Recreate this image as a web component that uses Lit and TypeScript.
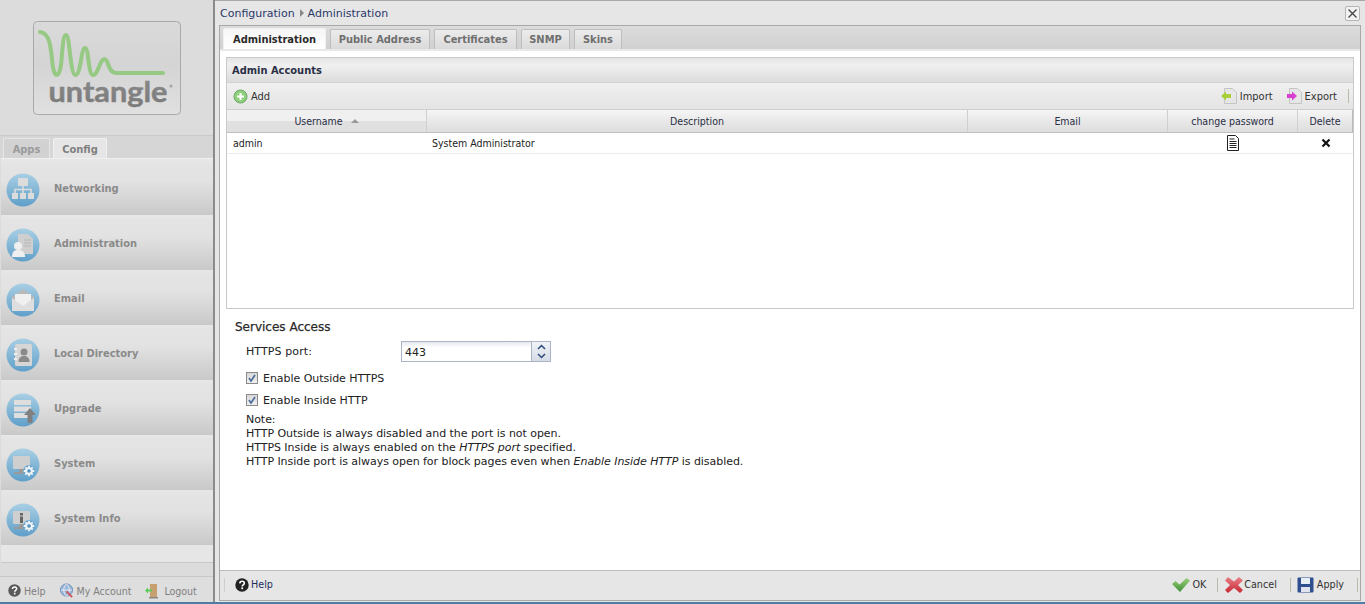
import { LitElement, html, css, svg } from "lit";
import { customElement } from "lit/decorators.js";

const disc = (inner: unknown) => html`<svg class="nav-ico" viewBox="0 0 34 34" width="34" height="34">
  <defs><linearGradient id="dg" x1="0" y1="0" x2="0" y2="1"><stop offset="0" stop-color="#a9cfe4"/><stop offset="1" stop-color="#5f9fc9"/></linearGradient></defs>
  <circle cx="17" cy="17" r="16.5" fill="url(#dg)"/>${inner}</svg>`;

const gear = svg`<g transform="translate(23 23)"><circle r="6" fill="#6aa6cf"/><g stroke="#eef3f7" stroke-width="1.800"><path d="M0-5.300V5.300M-5.300 0H5.300M-3.700-3.700 3.700 3.700M-3.700 3.700 3.700-3.700"/></g><circle r="3.800" fill="#eef3f7"/><circle r="1.800" fill="#4d8fbd"/></g>`;

const icons: Record<string, unknown> = {
  Networking: svg`<g fill="#dcdcdc"><rect x="12" y="5" width="10" height="8" rx="1"/><rect x="6" y="20" width="6" height="6"/><rect x="14" y="20" width="6" height="6"/><rect x="22" y="20" width="6" height="6"/></g><path d="M17 13v7M9 20v-3.500h16V20" fill="none" stroke="#dcdcdc" stroke-width="1.6"/>`,
  Administration: svg`<path d="M12 6h10l5 5v15H12z" fill="#cfcfcf"/><path d="M18 12h7M18 15h7M18 18h7" stroke="#b5b5b5"/><circle cx="12" cy="18" r="4" fill="#efefef"/><path d="M6 29c0-6 3-7 6-7s7 1 7 7z" fill="#efefef"/>`,
  Email: svg`<path d="M6 14 17 6l11 8v13H6z" fill="#b9b9b9"/><path d="M9 11h16v9l-8 4-8-4z" fill="#f0f0f0"/><path d="M6 15l11 8 11-8v13H6z" fill="#dedede"/>`,
  "Local Directory": svg`<rect x="9" y="6" width="17" height="22" rx="1.500" fill="#d6d6d6"/><g fill="#eee"><rect x="8" y="10" width="3" height="2"/><rect x="8" y="15" width="3" height="2"/><rect x="8" y="20" width="3" height="2"/></g><circle cx="18" cy="14" r="3.500" fill="#8a8a8a"/><path d="M12.500 24c0-5 3-6 5.500-6s5.500 1 5.500 6z" fill="#8a8a8a"/>`,
  Upgrade: svg`<g fill="#dedede"><rect x="8" y="7" width="17" height="5"/><rect x="8" y="13.500" width="17" height="5"/><rect x="8" y="20" width="17" height="5"/></g><path d="M24 15l6 7h-3.500v8h-5v-8H18z" fill="#808080"/>`,
  System: svg`<rect x="7" y="8" width="17" height="13" rx="1" fill="#cfcfcf"/><rect x="13" y="21" width="5" height="3" fill="#9a9a9a"/><rect x="8" y="24" width="14" height="2" fill="#9a9a9a"/>${gear}`,
  "System Info": svg`<rect x="7" y="8" width="17" height="13" rx="1" fill="#cfcfcf"/><rect x="14" y="10" width="3" height="2.500" fill="#666"/><rect x="14" y="13.500" width="3" height="6.500" fill="#666"/><rect x="13" y="21" width="5" height="3" fill="#9a9a9a"/><rect x="8" y="24" width="14" height="2" fill="#9a9a9a"/>${gear}`,
};

const question = (s: number) => html`<svg width=${s} height=${s} viewBox="0 0 14 14"><circle cx="7" cy="7" r="6.700" fill="currentColor"/><path d="M4.800 5.400C4.900 3.900 5.900 3.300 7.100 3.300c1.300 0 2.200.8 2.200 1.900 0 1.700-2.100 1.600-2.100 3.200" fill="none" stroke="#fff" stroke-width="1.600"/><rect x="6.300" y="9.400" width="1.800" height="1.800" fill="#fff"/></svg>`;

const doc = (color: string, dir: "l" | "r") => html`<svg width="16" height="16" viewBox="0 0 16 16">
  <path d="M3.500 .5h8l4 4v11h-12z" fill="#e6e6e6" stroke="#c4c4c4"/>
  <path d=${dir === "l" ? "M0 8l5-4.500v2.500h5v4H5v2.500z" : "M11 8 6 3.500v2.500H1v4h5v2.500z"} fill=${color}/>
</svg>`;

@customElement("app-root")
export class AppRoot extends LitElement {
  static styles = css`
    :host { display: block; width: 1365px; height: 604px; overflow: hidden; background: #4d7da3; }
    * { box-sizing: border-box; }
    .page { display: flex; height: 602px; font: 11px "DejaVu Sans", sans-serif; color: #222; background: #dcdcdc; }
    .narrow { font-family: "DejaVu Sans Condensed", "DejaVu Sans", sans-serif; font-stretch: condensed; }

    .side { width: 213px; flex: none; display: flex; flex-direction: column; background: #dcdcdc; }
    .logo-area { height: 135px; padding: 21px 0 0 33px; }
    .side-tabs { height: 23px; border-top: 1px solid #c9c9c9; padding: 2px 0 0 3px; display: flex; gap: 3px; background: #d6d6d6; align-items: flex-end; }
    .stab { height: 20px; border: 1px solid #e6e6e6; border-bottom: 0; border-radius: 2px 2px 0 0; font-weight: bold; color: #9a9a9a; padding-top: 4px; text-align: center; background: #d2d2d2; }
    .stab.on { background: #e6e6e6; color: #808080; border-color: #f0f0f0; }
    .nav { height: 405px; margin-left: 1px; padding-top: 4px; display: flex; flex-direction: column; background: #e6e6e6; border-top: 1px solid #f0f0f0; border-bottom: 1px solid #c8c8c8; }
    .nav-item { height: 52px; flex: none; margin-bottom: 3px; display: flex; align-items: center; padding-left: 5px; background: linear-gradient(#e4e4e4 0%, #e2e2e2 35%, #c9c9c9 100%); font-weight: bold; color: #8a8a8a; }
    .nav-item span { padding-bottom: 2px; }
    .nav-ico { flex: none; margin-right: 14px; margin-top: 1px; }
    .side-foot { margin-top: 13px; flex: 1; border-top: 1px solid #c9c9c9; display: flex; align-items: center; padding: 2px 0 0 8px; color: #7f7f7f; font-size: 10.5px; background: #dedede; }
    .side-foot .a { display: flex; align-items: center; gap: 3px; }
    .side-foot .h { color: #5a5a5a; margin-right: 13px; }
    .side-foot .m { margin-right: 14px; }

    .rule { width: 2px; flex: none; background: #8b8b8b; }

    .win { flex: 1; min-width: 0; display: flex; flex-direction: column; background: #e6e6e6; border-top: 1px solid #a8a8a8; }
    .crumb { height: 24px; flex: none; display: flex; align-items: center; padding: 0 5px 0 4px; color: #2a3868; margin-left: 1px; }
    .crumb .arrow { width: 0; height: 0; border-left: 4px solid #888; border-top: 4px solid transparent; border-bottom: 4px solid transparent; margin: 0 4px 0 5px; }
    .close { margin-left: auto; width: 15px; height: 15px; border: 1px solid #b5b5b5; border-radius: 2px; background: #f2f2f2; display: flex; }

    .frame { flex: 1; min-height: 0; margin: 0 4px 0 4px; border: 1px solid #a8a8a8; background: #fff; display: flex; flex-direction: column; }
    .tabbar { height: 25px; flex: none; display: flex; gap: 4px; padding: 3px 0 0 3px; background: linear-gradient(#dcdcdc, #d0d0d0); border-bottom: 2px solid #e8e8e8; align-items: flex-end; }
    .tab { height: 20px; border: 1px solid #bdbdbd; border-bottom: 0; border-radius: 2px 2px 0 0; background: linear-gradient(#ececec, #dadada); font-weight: bold; color: #6f6f6f; text-align: center; padding-top: 3px; }
    .tab.on { background: linear-gradient(#f6f6f6, #fff); color: #2a2a2a; border-color: #f0f0f0; height: 21px; padding-top: 4px; }

    .body { flex: 1; min-height: 0; padding: 6px 6px 0 6px; }
    .grid { height: 252px; border: 1px solid #c9c9c9; display: flex; flex-direction: column; background: #fff; }
    .g-title { height: 25px; flex: none; background: linear-gradient(#e4e4e4, #f0f0f0 30%, #dcdcdc); padding: 1px 5px 0; display: flex; align-items: center; font-weight: bold; color: #2a2f45; border-bottom: 1px solid #d2d2d2; }
    .g-tools { height: 27px; flex: none; display: flex; align-items: center; padding: 0 4px 0 6px; background: linear-gradient(#f0f0f0, #e4e4e4); border-bottom: 1px solid #cfcfcf; color: #333; }
    .tool { display: flex; align-items: center; gap: 3px; }
    .g-tools .sp { flex: 1; }
    .sep { width: 1px; height: 14px; background: #bdb9a8; }
    .cols, .row { display: grid; grid-template-columns: 200px 541px 200px 130px 1fr; flex: none; font-size: 10.5px; }
    .cols { height: 23px; border-bottom: 1px solid #c0c0c0; background: linear-gradient(#f6f6f6, #e8e8e8 50%, #dedede); }
    .cols > div { display: flex; align-items: center; justify-content: center; border-right: 1px solid #cfcfcf; color: #2a2f45; }
    .cols > div.sorted { background: linear-gradient(#f0f0f0 50%, #e0e0e0 50%); }
    .cols > div:last-child { border-right: 1px solid #bbb; }
    .caret { width: 0; height: 0; margin-left: 8px; border-left: 4px solid transparent; border-right: 4px solid transparent; border-bottom: 4px solid #999; }
    .row { height: 21px; border-bottom: 1px solid #ececec; align-items: center; color: #222; }
    .row > div { padding-left: 6px; }
    .row > div.d { padding-left: 5px; }
    .row .c { padding: 0; display: flex; justify-content: center; }

    .svc { padding: 11px 0 0 9px; }
    .svc h4 { margin: 0; font: inherit; font-weight: normal; font-size: 12px; -webkit-text-stroke: .25px #2a2a2a; color: #2a2a2a; line-height: 14px; }
    .form { padding: 7px 0 0 11px; letter-spacing: -0.045px; }
    .f-row { display: flex; align-items: center; height: 21px; }
    .f-row label { width: 155px; letter-spacing: .1px; }
    .spin { display: flex; width: 150px; height: 21px; }
    .spin input { flex: 1; min-width: 0; border: 1px solid #abb5c5; background: linear-gradient(#e6e9ee, #fff 30%); font: inherit; padding: 1px 0 0 3px; color: #222; }
    .btns { width: 19px; flex: none; display: flex; flex-direction: column; border: 1px solid #abb5c5; border-left: 0; background: linear-gradient(#f0f2f6, #d6dce6); }
    .btns span { flex: 1; display: flex; align-items: center; justify-content: center; }
    .chk { display: flex; align-items: center; gap: 5px; height: 22px; }
    .chk .box { width: 12px; height: 12px; border: 1px solid #8a8a8a; background: linear-gradient(#d8d8d8, #f0f0f0); display: flex; }
    .note { margin: 0; line-height: 14px; padding-top: 2px; color: #222; }
    .note i { font-style: italic; }

    .foot { height: 30px; flex: none; display: flex; align-items: center; padding: 0 2px 2px 4px; background: #e6e6e6; border-top: 1px solid #bdbdbd; font-size: 10.7px; }
    .foot .sp { flex: 1; }
    .foot .lead { width: 1px; height: 14px; background: #cfcfcf; margin-right: 10px; }
    .foot .b { display: flex; align-items: center; color: #333; border-right: 1px solid #bdb9a8; height: 14px; }
    .foot .ok { gap: 2px; padding-right: 11px; margin-right: 7px; }
    .foot .cancel { gap: 1px; padding-right: 13px; margin-right: 6px; }
    .foot .apply { gap: 3px; padding-right: 13px; }
    .help { display: flex; align-items: center; gap: 2px; color: #1f2d5e; }
    .help svg { color: #222; }
  `;

  render() {
    const navs = ["Networking", "Administration", "Email", "Local Directory", "Upgrade", "System", "System Info"];
    const check = html`<svg width="10" height="10" viewBox="0 0 10 10"><path d="M2 5l2 3 4-6" fill="none" stroke="#4a6a9a" stroke-width="1.600"/></svg>`;
    return html`<div class="page">
      <aside class="side">
        <div class="logo-area">
          <svg width="149" height="95" viewBox="33 21 149 95">
            <defs>
              <linearGradient id="lg" x1="0" y1="0" x2="0" y2="1"><stop offset="0" stop-color="#dadada"/><stop offset=".45" stop-color="#d4d4d4"/><stop offset="1" stop-color="#e0e0e0"/></linearGradient>
              <linearGradient id="tg" x1="0" y1="0" x2="0" y2="1"><stop offset="0" stop-color="#8e8e8e"/><stop offset="1" stop-color="#787878"/></linearGradient>
            </defs>
            <rect x="33.500" y="21.500" width="147" height="93" rx="4" fill="url(#lg)" stroke="#a9a9a9"/>
            <path d="M40 32C50 33 51 48 52.500 64 54 79 60 79 61.500 60 63 42 63.500 35 66 35 70 35 70 75 75.500 75 81 75 81 48 85 48 89 48 88 75 93 75 98 75 100 59 104.500 59 108.500 59 108 73 116 73L163 73" fill="none" stroke="#96c983" stroke-width="4" stroke-linecap="round"/>
            <text x="48.500" y="102" textLength="119" lengthAdjust="spacingAndGlyphs" fill="url(#tg)" stroke="#848484" stroke-width=".5" font-family="Lato, 'Open Sans', sans-serif" font-size="29" font-weight="700">untangle</text>
            <circle cx="171" cy="86" r="1.600" fill="#a8a8a8"/>
          </svg>
        </div>
        <div class="side-tabs narrow">
          <div class="stab" style="width:47px">Apps</div>
          <div class="stab on" style="width:54px">Config</div>
        </div>
        <nav class="nav narrow">
          ${navs.map((n) => html`<div class="nav-item">${disc(icons[n])}<span>${n}</span></div>`)}
        </nav>
        <div class="side-foot narrow">
          <span class="a h">${question(13)}<span style="color:#7f7f7f">Help</span></span>
          <span class="a m"><svg width="15" height="15" viewBox="0 0 16 16"><circle cx="8" cy="7.500" r="6.500" fill="#9ab6d8" stroke="#6f8fba"/><path d="M2 7.500h12M8 1c-4 4-4 9 0 13M8 1c4 4 4 9 0 13" fill="none" stroke="#e8eef6"/><path d="M8 9l6 6" stroke="#d0505a" stroke-width="2"/></svg>My Account</span>
          <span class="a"><svg width="14" height="16" viewBox="0 0 14 16"><rect x="5" y="1" width="7" height="13" fill="#c8a070"/><rect x="4" y="14" width="9" height="1.500" fill="#888"/><path d="M0 7.500l3-3v2h4v2H3v2z" fill="#5ccb5c"/></svg><span style="margin-left:2px">Logout</span></span>
        </div>
      </aside>
      <div class="rule"></div>
      <main class="win">
        <div class="crumb"><span>Configuration</span><span class="arrow"></span><span>Administration</span>
          <span class="close"><svg width="13" height="13" viewBox="0 0 13 13"><path d="M2.500 2.500l8 8M10.500 2.500l-8 8" stroke="#444" stroke-width="1.300"/></svg></span>
        </div>
        <div class="frame">
          <div class="tabbar narrow">
            <div class="tab on" style="width:103px">Administration</div>
            <div class="tab" style="width:100px">Public Address</div>
            <div class="tab" style="width:83px">Certificates</div>
            <div class="tab" style="width:49px">SNMP</div>
            <div class="tab" style="width:48px">Skins</div>
          </div>
          <div class="body">
            <section class="grid narrow">
              <div class="g-title">Admin Accounts</div>
              <div class="g-tools">
                <span class="tool"><svg width="15" height="15" viewBox="0 0 15 15"><circle cx="7.500" cy="7.500" r="6.500" fill="#8fd07f" stroke="#6aa860"/><path d="M7.500 4v7M4 7.500h7" stroke="#fff" stroke-width="2"/></svg>Add</span>
                <span class="sp"></span>
                <span class="tool" style="margin-right:13px">${doc("#a8cf3a", "l")}Import</span>
                <span class="tool" style="margin-right:11px">${doc("#d83fd0", "r")}Export</span>
                <span class="sep"></span>
              </div>
              <div class="cols">
                <div class="sorted">Username<span class="caret"></span></div>
                <div>Description</div><div>Email</div><div>change password</div><div>Delete</div>
              </div>
              <div class="row">
                <div>admin</div><div class="d">System Administrator</div><div></div>
                <div class="c"><svg width="14" height="16" viewBox="0 0 14 16"><path d="M1.500.5h8l3 3v12h-11z" fill="#fff" stroke="#222"/><path d="M3.500 4h5M3.500 6.500h7M3.500 8.500h7M3.500 10.500h7M3.500 12.500h7" stroke="#222"/></svg></div>
                <div class="c"><svg width="10" height="10" viewBox="0 0 10 10"><path d="M1.500 1.500l7 7M8.500 1.500l-7 7" stroke="#111" stroke-width="2.200"/></svg></div>
              </div>
            </section>
            <section class="svc">
              <h4>Services Access</h4>
              <div class="form">
                <div class="f-row"><label>HTTPS port:</label>
                  <div class="spin"><input value="443"/><div class="btns">
                    <span><svg width="9" height="6" viewBox="0 0 9 6"><path d="M1 5l3.500-3.500L8 5" fill="none" stroke="#2a4a7a" stroke-width="1.500"/></svg></span>
                    <span><svg width="9" height="6" viewBox="0 0 9 6"><path d="M1 1l3.500 3.500L8 1" fill="none" stroke="#2a4a7a" stroke-width="1.500"/></svg></span>
                  </div></div>
                </div>
                <div style="height:5px"></div>
                <div class="chk"><span class="box">${check}</span>Enable Outside HTTPS</div>
                <div class="chk"><span class="box">${check}</span>Enable Inside HTTP</div>
                <p class="note">Note:<br/>HTTP Outside is always disabled and the port is not open.<br/>HTTPS Inside is always enabled on the <i>HTTPS port</i> specified.<br/>HTTP Inside port is always open for block pages even when <i>Enable Inside HTTP</i> is disabled.</p>
              </div>
            </section>
          </div>
          <div class="foot narrow">
            <span class="lead"></span>
            <span class="help">${question(14)}Help</span>
            <span class="sp"></span>
            <span class="b ok"><svg width="18" height="15" viewBox="0 0 18 15"><defs><linearGradient id="okg" x1="0" y1="0" x2="0" y2="1"><stop offset="0" stop-color="#9ad07a"/><stop offset="1" stop-color="#3e8f35"/></linearGradient></defs><path d="M0 7l3.500-3 4 3.500L14.500 1 18 3.500 8 15z" fill="url(#okg)"/></svg>OK</span>
            <span class="b cancel"><svg width="18" height="16" viewBox="0 0 18 16"><defs><linearGradient id="xg" x1="0" y1="0" x2="0" y2="1"><stop offset="0" stop-color="#e88088"/><stop offset="1" stop-color="#c82832"/></linearGradient></defs><path d="M3 0l6 4.500L14 0l4 3.500-5 4.500 5 5-3 3-6-5-6 5-3-3 5-5-5-4.500z" fill="url(#xg)"/></svg>Cancel</span>
            <span class="b apply"><svg width="17" height="16" viewBox="0 0 17 16"><rect x=".5" y=".5" width="16" height="15" rx="1" fill="#2f4f8f"/><rect x="4" y="1" width="9" height="6" fill="#e8eef6"/><rect x="4" y="10" width="9" height="5" fill="#dfe4ec"/></svg>Apply</span>
          </div>
        </div>
        <div style="height:1px"></div>
      </main>
    </div>`;
  }
}
